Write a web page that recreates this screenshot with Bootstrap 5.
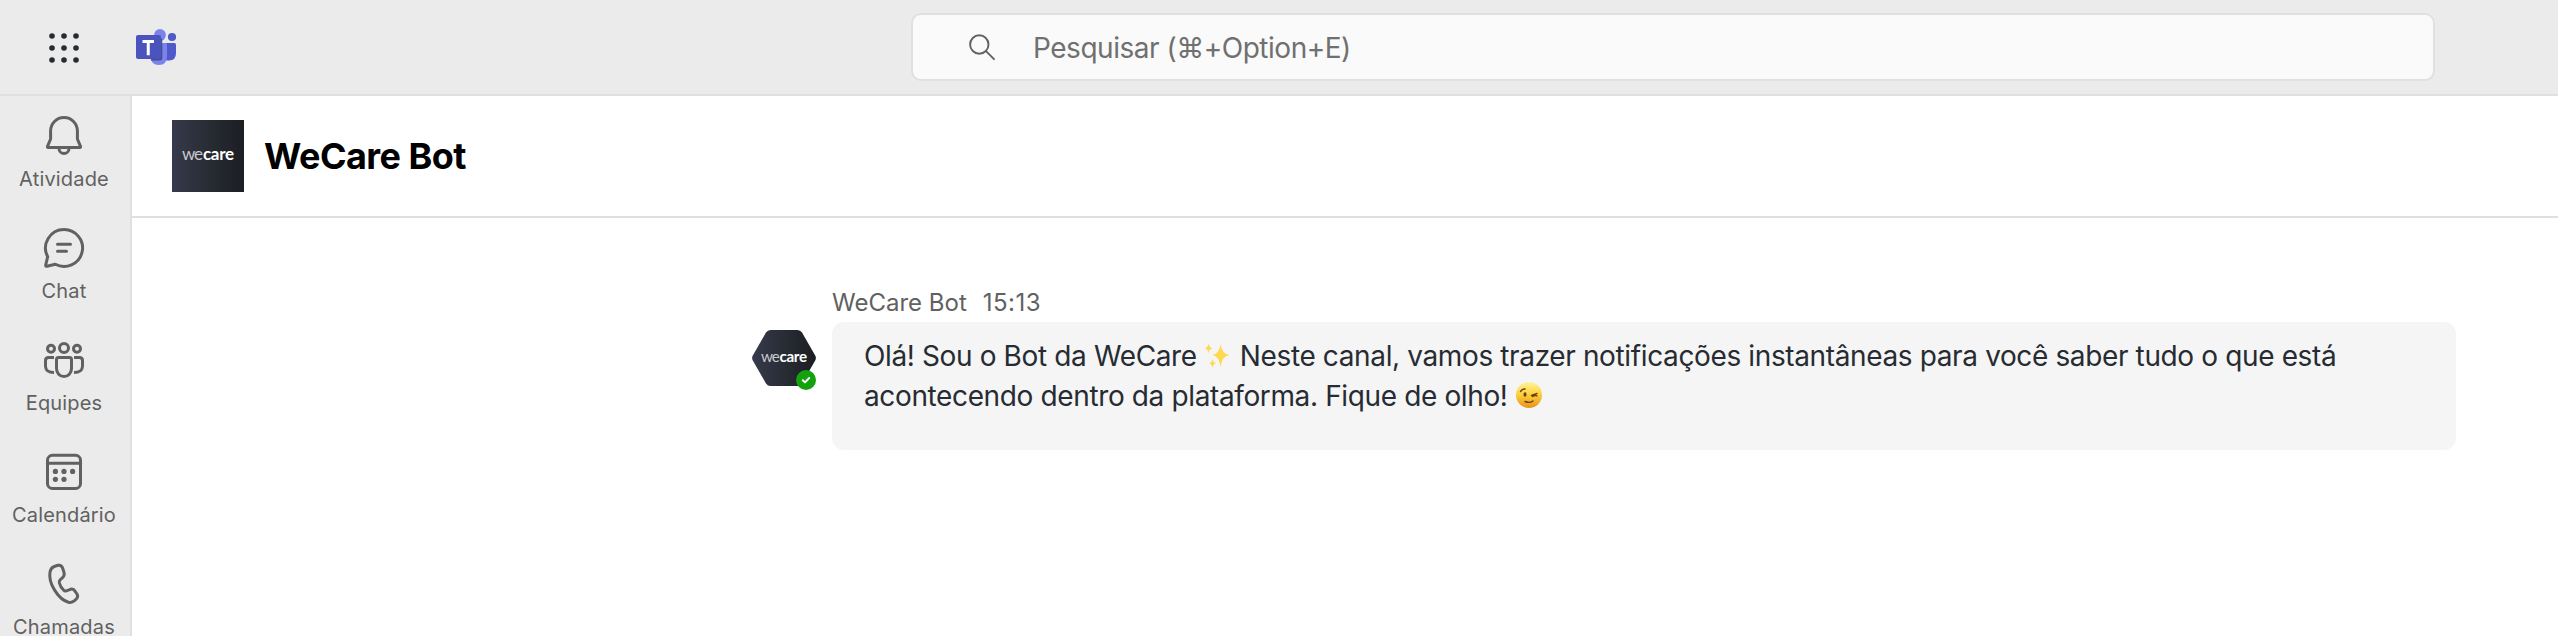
<!DOCTYPE html>
<html lang="pt-BR">
<head>
<meta charset="utf-8">
<meta name="viewport" content="width=device-width, initial-scale=1">
<title>WeCare Bot</title>
<link href="https://cdn.jsdelivr.net/npm/bootstrap@5.3.0/dist/css/bootstrap.min.css" rel="stylesheet">
<style>
  body { font-family: Inter, "DejaVu Sans", sans-serif; color: #272b32; background: #fff; height: 636px; }
  svg { display: block; flex: none; }
  .topbar { height: 96px; background: #ebebeb; border-bottom: 2px solid #e0e0e0; padding: 13px 123px 13px 40px; }
  .apps-icon { margin-right: 46px; }
  .search-box { width: 1524px; height: 68px; background: #fafafa; border: 2px solid #e0e0e0; border-radius: 10px; padding: 2px 0 0 52px; gap: 36px; font-size: 28px; letter-spacing: -.48px; color: #707070; }
  .rail { width: 132px; background: #ebebeb; border-right: 2px solid #e0e0e0; }
  .rail-item { height: 112px; padding-top: 16px; padding-right: 2px; width: 130px; color: #616161; font-size: 20px; line-height: 24px; gap: 7px; flex: none; letter-spacing: .17px; white-space: nowrap; }
  .rail-item svg { fill: none; stroke: currentColor; stroke-width: 3; stroke-linecap: round; stroke-linejoin: round; }
  .chat-head { height: 122px; border-bottom: 2px solid #e0e0e0; padding: 0 40px; gap: 20px; }
  .chat-head h1 { font-size: 36px; font-weight: 700; color: #000; line-height: 44px; letter-spacing: -.55px; }
  .thread { padding: 70px 102px 0 620px; gap: 16px; }
  .byline { font-size: 24px; line-height: 30px; color: #616161; gap: 16px; padding-bottom: 4px; }
  .byline time { letter-spacing: .5px; }
  .bubble { background: #f5f5f5; border-radius: 12px; height: 128px; padding: 14px 32px; font-size: 28px; line-height: 40px; letter-spacing: -.37px; white-space: nowrap; }
  .emoji { display: inline-block; vertical-align: -3px; }
  .avatar { margin-top: 42px; }
  .logotype { font-family: Lato, sans-serif; fill: #fff; }
</style>
</head>
<body class="d-flex flex-column overflow-hidden">
<header class="topbar d-flex align-items-center flex-shrink-0">
  <svg class="apps-icon" width="48" height="48" viewBox="0 0 48 48" fill="#272b32">
    <g id="dots"><circle cx="12" cy="13" r="2.8"/><circle cx="24" cy="13" r="2.8"/><circle cx="36" cy="13" r="2.8"/></g>
    <use href="#dots" y="12"/><use href="#dots" y="24"/>
  </svg>
  <svg width="44" height="40" viewBox="0 0 44 40">
    <circle cx="38" cy="10" r="4.1" fill="#5059c9"/>
    <path d="M28 16H40.500Q42 16 42 17.500V26Q42 33.500 35 33.500H28Z" fill="#5059c9"/>
    <circle cx="26" cy="8" r="5.900" fill="#7b83eb"/>
    <path d="M16 16H31.500Q33 16 33 17.500V29Q33 38 25 38T16 29Z" fill="#7b83eb"/>
    <path d="M17 11H26Q28.300 11 28.300 13V31Q28.300 33.500 26 33.500H17Z" fill="#3d4389" opacity=".85"/>
    <rect x="2" y="8" width="25" height="24" rx="2" fill="#4b53bc"/>
    <path d="M8.500 14.500H20M14.250 14.500V28.200" stroke="#fff" stroke-width="3" fill="none"/>
  </svg>
  <div class="search-box d-flex align-items-center ms-auto">
    <svg width="32" height="32" viewBox="0 0 32 32" fill="none" stroke="#616161" stroke-width="1.900" stroke-linecap="round"><circle cx="14.300" cy="12.500" r="9.200"/><path d="M21 19.200L29 27.200"/></svg>
    <span>Pesquisar (⌘+Option+E)</span>
  </div>
</header>
<div class="d-flex flex-grow-1 overflow-hidden">
  <nav class="rail d-flex flex-column flex-shrink-0 overflow-hidden">
    <div class="rail-item d-flex flex-column align-items-center">
      <svg width="48" height="48" viewBox="0 0 48 48"><path d="M24 5.500C16.500 5.500 10.600 11.500 10.600 19V27L7.500 34.400Q7.100 35.500 8.200 35.500H39.800Q40.900 35.500 40.500 34.400L37.400 27V19C37.400 11.500 31.500 5.500 24 5.500ZM19 36.500A5 5 0 0 0 29 36.500"/></svg>
      <span>Atividade</span>
    </div>
    <div class="rail-item d-flex flex-column align-items-center">
      <svg width="48" height="48" viewBox="0 0 48 48"><path d="M24 5.500A18.500 18.500 0 1 1 15.300 40.300L7 42.300Q5.500 42.500 5.700 41L7.700 32.700A18.500 18.500 0 0 1 24 5.500ZM17.500 20.300H30.500M17.500 27.300H26.500"/></svg>
      <span>Chat</span>
    </div>
    <div class="rail-item d-flex flex-column align-items-center">
      <svg width="48" height="48" viewBox="0 0 48 48"><circle cx="11" cy="12.800" r="3.500"/><circle cx="24" cy="12" r="4.500"/><circle cx="37" cy="12.800" r="3.500"/><path d="M18.500 21.500H29.500Q31.500 21.500 31.500 23.500V32.500A7.500 8 0 0 1 16.500 32.500V23.500Q16.500 21.500 18.500 21.500Z"/><path stroke-linecap="butt" d="M14 21.500H8.500Q5.500 21.500 5.500 24.500V30.500Q6 36.500 14 36.500M34 21.500H39.500Q42.500 21.500 42.500 24.500V30.500Q42 36.500 34 36.500"/></svg>
      <span>Equipes</span>
    </div>
    <div class="rail-item d-flex flex-column align-items-center">
      <svg width="48" height="48" viewBox="0 0 48 48"><rect x="7.500" y="7.300" width="33" height="33.200" rx="5"/><path d="M7.500 15.300H40.500"/><g fill="currentColor" stroke="none"><circle cx="15.400" cy="23.400" r="2.600"/><circle cx="24" cy="23.400" r="2.600"/><circle cx="32.600" cy="23.400" r="2.600"/><circle cx="15.400" cy="31.300" r="2.600"/><circle cx="24" cy="31.300" r="2.600"/></g></svg>
      <span>Calendário</span>
    </div>
    <div class="rail-item d-flex flex-column align-items-center">
      <svg width="48" height="48" viewBox="0 0 48 48"><path d="M14.200 6.500L18 5.300Q21.300 4.700 22.600 8L24 12.500Q24.800 15.500 22.800 17.400L20 20Q19 21 19.400 23Q20.500 27.500 23.700 30.200Q24.800 31.300 26.300 30.800L30.500 29.300Q33 28.500 34.600 30.600L37 34Q38.500 36.500 36.500 38.700L34.500 40.700Q32 43 28.500 42.300C18.500 39.500 8 23.500 10 12Q11 7.600 14.200 6.500Z"/></svg>
      <span>Chamadas</span>
    </div>
  </nav>
  <main class="flex-grow-1 d-flex flex-column">
    <div class="chat-head d-flex align-items-center">
      <svg width="72" height="72" viewBox="0 0 72 72">
        <defs><linearGradient id="ink"><stop offset="0" stop-color="#373a4b"/><stop offset=".5" stop-color="#282c34"/><stop offset="1" stop-color="#1b1e22"/></linearGradient></defs>
        <path d="M0 0H72V72H0Z" fill="url(#ink)"/>
        <text class="logotype" y="40" font-size="17"><tspan x="10" fill="#c9c9cc" textLength="21">we</tspan><tspan x="31" font-weight="700" textLength="31">care</tspan></text>
      </svg>
      <h1 class="mb-0">WeCare Bot</h1>
    </div>
    <div class="thread d-flex">
      <svg class="avatar" width="64" height="64" viewBox="0 0 64 64">
        <path d="M18.500 0H45.500Q48.500 0 50 2.500L63.200 25.500Q64.600 28 63.200 30.500L50 53.500Q48.500 56 45.500 56H18.500Q15.500 56 14 53.500L.8 30.500Q-.6 28 .8 25.500L14 2.500Q15.500 0 18.500 0Z" fill="url(#ink)"/>
        <text class="logotype" y="31.700" font-size="15.200"><tspan x="9" fill="#c9c9cc" textLength="18.700">we</tspan><tspan x="27.500" font-weight="700" textLength="27.500">care</tspan></text>
        <circle cx="54" cy="50" r="10" fill="#13a10e"/>
        <path d="M50.800 50.200L53 52.400L57.200 48" fill="none" stroke="#fff" stroke-width="2" stroke-linecap="round" stroke-linejoin="round"/>
      </svg>
      <div class="flex-grow-1">
        <div class="byline d-flex"><span>WeCare Bot</span><time>15:13</time></div>
        <div class="bubble">Olá! Sou o Bot da WeCare <svg class="emoji" width="28" height="28" viewBox="0 0 28 28"><path d="M16.500 3Q17.500 12.500 25.500 14Q17.500 15.500 16.500 26Q15.500 15.500 8.500 14Q15.500 12.500 16.500 3ZM4.500 2Q5 6.500 8.500 7.300Q5 8.200 4.500 12.500Q4 8.200 1 7.300Q4 6.500 4.500 2ZM8.500 18Q9 21.500 12 22.300Q9 23 8.500 27Q8 23 5 22.300Q8 21.500 8.500 18Z" fill="#ffd84d"/></svg> Neste canal, vamos trazer notificações instantâneas para você saber tudo o que está<br>acontecendo dentro da plataforma. Fique de olho! <svg class="emoji" width="28" height="28" viewBox="0 0 28 28"><defs><linearGradient id="sun" x2="0" y2="1"><stop offset="0" stop-color="#fff3a0"/><stop offset=".45" stop-color="#fdd33c"/><stop offset="1" stop-color="#e8921a"/></linearGradient></defs><circle cx="14" cy="14" r="13" fill="url(#sun)"/><ellipse cx="10" cy="13.500" rx="1.500" ry="2.300" fill="#6b3f12"/><path d="M5.500 10.500Q7.500 7.500 10 8M16.500 14.500L22 12.500M17.500 15.500Q20 13.800 22 15M10 20.500Q14.500 22.500 18 20" fill="none" stroke="#6b3f12" stroke-width="1.400" stroke-linecap="round"/></svg></div>
      </div>
    </div>
  </main>
</div>
<script src="https://cdn.jsdelivr.net/npm/bootstrap@5.3.0/dist/js/bootstrap.bundle.min.js"></script>
</body>
</html>
